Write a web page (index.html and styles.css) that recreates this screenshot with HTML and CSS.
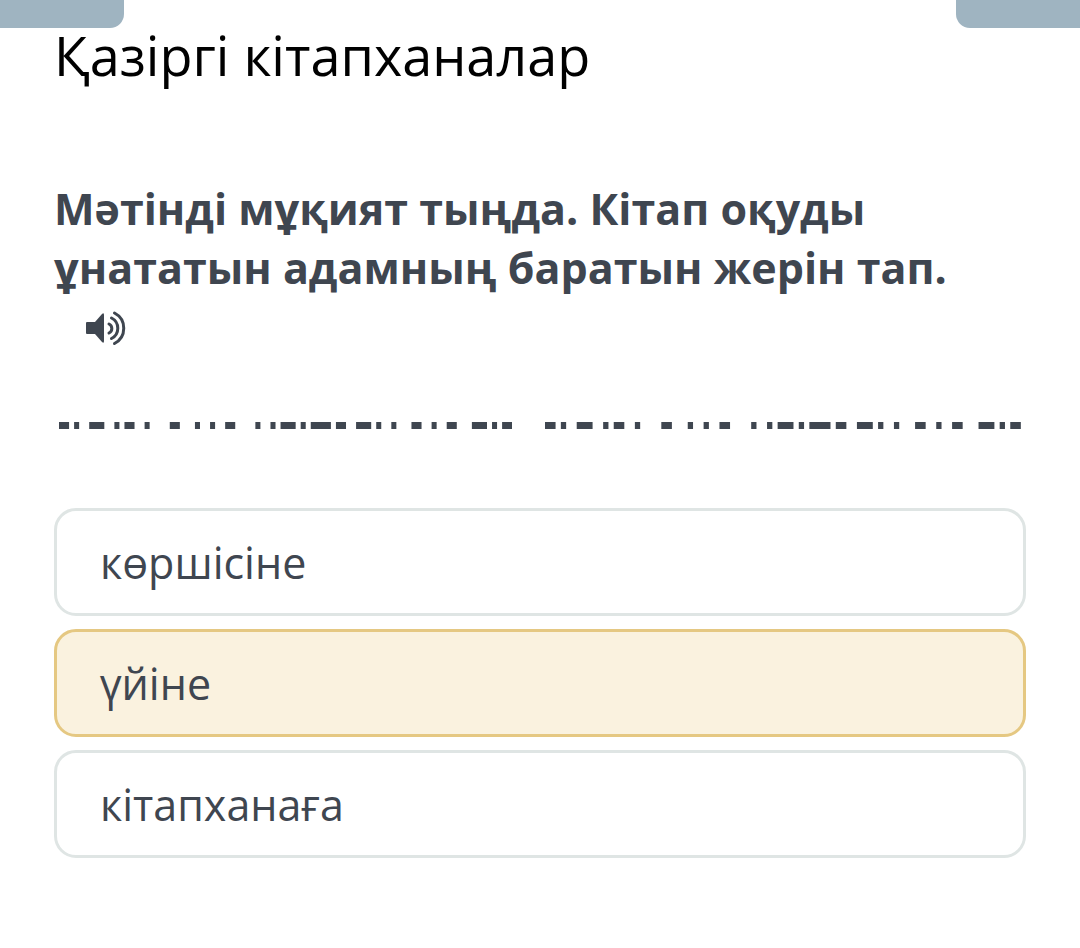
FILE: index.html
```html
<!DOCTYPE html>
<html lang="kk">
<head>
	<title>Қазіргі кітапханалар</title>
	<meta charset="utf-8">
	<meta name="viewport" content="width=device-width, initial-scale=1">
	<link rel="stylesheet" href="styles.css">
</head>
<body>
	<div class="top_bar">
		<div class="tab tab_left"></div>
		<div class="tab tab_right"></div>
	</div>
	<main class="container">
		<h1 class="title">Қазіргі кітапханалар</h1>
		<h2 class="question">Мәтінді мұқият тыңда. Кітап оқуды ұнататын адамның баратын жерін тап.</h2>
		<button type="button" class="sound" aria-label="Тыңдау">
			<svg viewBox="0 0 42 36">
				<path d="M2 12h8l7-8q2-2 2 1v26q0 3-2 1l-7-8H2q-1 0-1-1V13q0-1 1-1z" fill="#3f4650"/>
				<path d="M24 14a5 5 0 0 1 0 9M26.500 8a11.500 11.500 0 0 1 0 20.500M29.500 3a17.200 17.200 0 0 1 0 30.500" fill="none" stroke="#3f4650" stroke-width="3" stroke-linecap="round"/>
			</svg>
		</button>
		<div class="dashes">
			<svg class="dash_first" viewBox="0 0 90 1" preserveAspectRatio="none">
				<path id="dash" fill="#3f4650" d="M0 0h2v1h-2zM3 0h1v1h-1zM6 0h3v1h-3zM11 0h1v1h-1zM13 0h2v1h-2zM17 0h1v1h-1zM22 0h2v1h-2zM27 0h1v1h-1zM30 0h1v1h-1zM33 0h2v1h-2zM39 0h1v1h-1zM42 0h1v1h-1zM44 0h3v1h-3zM48 0h1v1h-1zM50 0h4v1h-4zM55 0h2v1h-2zM59 0h3v1h-3zM63 0h1v1h-1zM66 0h1v1h-1zM70 0h2v1h-2zM74 0h1v1h-1zM77 0h2v1h-2zM82 0h3v1h-3zM86 0h1v1h-1zM88 0h2v1h-2z"/>
			</svg>
			<svg class="dash_second" viewBox="0 0 90 1" preserveAspectRatio="none">
				<use href="#dash"/>
			</svg>
		</div>
		<form class="answers">
			<label class="answer"><input type="radio" name="answer" value="1"><span>көршісіне</span></label>
			<label class="answer"><input type="radio" name="answer" value="2" checked><span>үйіне</span></label>
			<label class="answer"><input type="radio" name="answer" value="3"><span>кітапханаға</span></label>
		</form>
	</main>
</body>
</html>
```
FILE: styles.css
```css
*{
	box-sizing:border-box;
	margin:0;
	padding:0;
}
body{
	background:white;
	color:#3f4650;
	font-family:"Open Sans","Noto Sans",sans-serif;
}
.top_bar{
	height:28px;
	display:flex;
	justify-content:space-between;
}
.tab{
	width:124px;
	background:#9fb4c1;
}
.tab_left{
	border-bottom-right-radius:14px;
}
.tab_right{
	border-bottom-left-radius:14px;
}
.container{
	padding:0 54px 90px;
}
.title{
	color:black;
	font-size:54px;
	font-weight:400;
	line-height:54px;
}
.question{
	margin-top:97px;
	font-size:43px;
	font-weight:700;
	line-height:59px;
}
.sound{
	display:block;
	width:42px;
	height:36px;
	margin:13px 0 0 31px;
	border:none;
	background:none;
	cursor:pointer;
}
.sound svg{
	display:block;
}
.dashes{
	display:flex;
	gap:33px;
	margin-top:76px;
	padding:0 5px;
}
.dashes svg{
	min-width:0;
	height:7px;
}
.dash_first{
	flex:20 1 0;
}
.dash_second{
	flex:21 1 0;
}
.answers{
	display:flex;
	flex-direction:column;
	gap:13px;
	margin-top:79px;
}
.answer{
	position:relative;
	height:108px;
	padding:0 43px;
	border:3px solid #dfe5e4;
	border-radius:22px;
	font-size:43px;
	line-height:103px;
	cursor:pointer;
}
.answer input{
	position:absolute;
	opacity:0;
}
.answer:has(input:checked){
	border-color:#e5c882;
	background:#faf2df;
}
.answer:has(input:focus-visible){
	outline:2px solid #9fb4c1;
}
```
